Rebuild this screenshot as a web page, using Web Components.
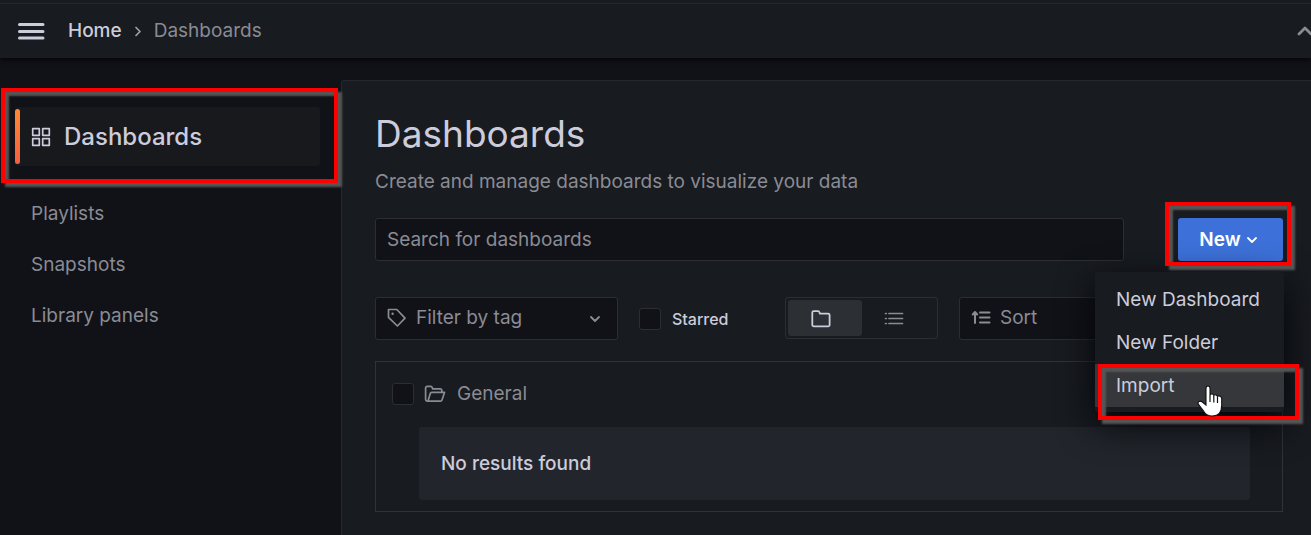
<!DOCTYPE html>
<html lang="en">
<head>
<meta charset="utf-8">
<title>Dashboards</title>
<style>
:root{
  --canvas:#111217; --primary:#181b1f; --secondary:#22252b; --line:#2c2e33;
  --text:#ccccdc; --muted:#8a8b95; --blue:#3d71d9; --active:#35373b;
}
html,body{margin:0;background:var(--canvas);min-height:100vh}
body{font:400 19px/28px Inter,"Liberation Sans",sans-serif;color:var(--text);overflow:hidden}
</style>
</head>
<body>
<app-shell>
  <app-header slot="header"></app-header>
  <side-nav slot="nav"></side-nav>
  <dashboard-page></dashboard-page>
</app-shell>
<script>
const define = (name, css, html, setup) => {
  const template = document.createElement('template');
  template.innerHTML = `<style>*{box-sizing:border-box}${css}</style>${html}`;
  customElements.define(name, class extends HTMLElement {
    constructor() {
      super();
      this.attachShadow({mode: 'open'}).append(template.content.cloneNode(true));
    }
    connectedCallback() { if (setup) setup(this, this.shadowRoot); }
  });
};

const icons = {
  menu: [28, '<path d="M2.500 7.500h23.500M2.500 14.500h23.500M2.500 21h23.500" stroke-width="3"/>'],
  right: [16, '<path d="M6 4.500l4 4-4 4" stroke-width="1.700"/>'],
  down: [16, '<path d="M4 6l4 4 4-4" stroke-width="1.800"/>'],
  up: [24, '<path d="M6 15l6-6 6 6" stroke-width="2.800"/>'],
  apps: [20, '<path d="M1.700 1.700h6.600v6.600H1.700zM11.700 1.700h6.600v6.600h-6.600zM1.700 11.700h6.600v6.600H1.700zM11.700 11.700h6.600v6.600h-6.600z" stroke-width="1.700"/>'],
  tag: [20, '<path d="M1.500 1.500h8.300l8.200 8.700-7.600 7.800-8.900-8.600z" stroke-width="1.700"/><circle cx="5.600" cy="5.800" r="1.200" fill="currentColor" stroke="none"/>'],
  folder: [20, '<path d="M1.300 15.800V3.600a1.500 1.500 0 0 1 1.500-1.500h4.300a1.400 1.400 0 0 1 1.300 1l.5 1.500h8.200a1.500 1.500 0 0 1 1.500 1.500v9.800a1.500 1.500 0 0 1-1.500 1.500H2.800a1.500 1.500 0 0 1-1.500-1.600z" stroke-width="1.800"/>'],
  open: [22, '<path d="M3.200 18.200a1.600 1.600 0 0 1-1.600-1.600V5a1.600 1.600 0 0 1 1.600-1.600h3.500a1.600 1.600 0 0 1 1.500 1.100l.4 1.300h7.600A1.600 1.600 0 0 1 17.800 7.400v2M3.200 18.200h13.200a1.700 1.700 0 0 0 1.600-1.200l2.500-7.600H7.700a1.500 1.500 0 0 0-1.400 1l-2 6.700a1.300 1.300 0 0 1-1.100 1.100z" stroke-width="1.700"/>'],
  list: [20, '<path d="M5 4.500h13.500M5 9.500h13.500M5 14.500h13.500M1.500 4.500h.8M1.500 9.500h.8M1.500 14.500h.8" stroke-width="1.700"/>'],
  sort: [20, '<path d="M9 4.500h9.500M9 9.500h9.500M9 14.500h9.500M4 15V4.500M1.800 6.500L4 4l2.200 2.500" stroke-width="2"/>']
};
define('ui-icon', ':host{display:block;flex:none}svg{display:block;fill:none;stroke:currentColor;stroke-linecap:round;stroke-linejoin:round}', '<svg aria-hidden="true"></svg>', (el, root) => {
  const [size, body] = icons[el.getAttribute('name')];
  const svg = root.querySelector('svg');
  svg.setAttribute('viewBox', `0 0 ${size} ${size}`);
  svg.setAttribute('width', size);
  svg.setAttribute('height', size);
  svg.innerHTML = body;
});

/* Red callout drawn around the control that hosts it */
define('call-out', `:host{position:absolute;z-index:5;pointer-events:none;border:4px solid #f00;
  box-shadow:4px 4px 2px #555,inset 4px 4px 2px #555}`, '');

define('app-shell', `:host{display:grid;grid-template:auto 1fr/341px minmax(0,1fr);min-height:100vh}
  slot[name=header]{display:block;grid-column:1/-1;position:relative;z-index:1}
  slot[name=nav]{display:block;position:relative;z-index:1}
  .main{padding-top:22px;display:flex}::slotted(dashboard-page){flex:1;min-width:0}`,
  '<slot name="header"></slot><slot name="nav"></slot><main class="main"><slot></slot></main>');

define('app-header', `:host{display:block;background:var(--primary);padding-top:3px;box-shadow:0 1px 6px #000}
  header{display:flex;align-items:center;height:55px;padding-left:17px;border-top:1px solid #25282c;overflow:hidden}
  button{border:0;padding:0;background:none;color:inherit}
  ol{display:flex;align-items:center;gap:8px;margin:0 0 0 23px;padding:0;list-style:none}
  a{color:inherit;text-decoration:none}.home{font-weight:500}.current{color:var(--muted)}ui-icon[name=right]{color:#a0a0ac}
  .up{margin:0 -6px 0 auto;color:var(--muted)}`,
  `<header><button aria-label="Toggle menu"><ui-icon name="menu"></ui-icon></button>
  <nav aria-label="Breadcrumbs"><ol><li class="home"><a href="#home">Home</a></li><li aria-hidden="true"><ui-icon name="right"></ui-icon></li><li class="current"><a href="#dashboards">Dashboards</a></li></ol></nav>
  <button class="up" aria-label="Hide top bar"><ui-icon name="up"></ui-icon></button></header>`);

define('side-nav', `:host{display:block;padding:49px 21px 0 15px}
  nav{display:flex;flex-direction:column}
  a{color:var(--muted);text-decoration:none;padding:0 16px;line-height:51px}
  .active{position:relative;display:flex;align-items:center;gap:13px;height:59px;margin-bottom:22px;background:#18191c;border-radius:3px;color:var(--text);font-weight:500;font-size:24px}
  .active::before{content:"";position:absolute;left:0;top:2px;bottom:2px;width:5px;border-radius:3px;background:linear-gradient(#ff8833,#f55f3e)}
  call-out{inset:-19px -18px -17px -14px}`,
  `<nav aria-label="Sections"><a class="active" href="#dashboards" aria-current="page"><ui-icon name="apps"></ui-icon>Dashboards<call-out></call-out></a>
  <a href="#playlists">Playlists</a><a href="#snapshots">Snapshots</a><a href="#library">Library panels</a></nav>`);

define('new-menu', `:host{display:block;position:relative;z-index:3}
  button{font:inherit;font-weight:600;color:#fff;background:var(--blue);border:0;border-radius:3px;display:flex;align-items:center;justify-content:center;gap:3px;width:105px;height:43px;padding:0 2px 0 0}
  button+call-out{inset:-16px -8px -5px -13px}
  .menu{position:absolute;top:54px;right:-1px;width:189px;padding:6px 0 5px;background:var(--primary);border-radius:3px;box-shadow:0 12px 36px #010409}
  a{display:block;position:relative;padding:0 21px;line-height:43px;color:inherit;text-decoration:none;white-space:nowrap}
  .hover{background:var(--active)}.hover call-out{inset:0 -15px -13px 3px}
  .hand{position:absolute;z-index:6;left:102px;top:21px;width:27px;height:32px}`,
  `<button aria-haspopup="menu" aria-expanded="true">New<ui-icon name="down"></ui-icon></button><call-out></call-out>
  <div class="menu" role="menu"><a role="menuitem" href="#new">New Dashboard</a><a role="menuitem" href="#folder">New Folder</a>
  <a role="menuitem" class="hover" href="#import">Import<call-out></call-out>
  <svg class="hand" viewBox="0 0 27 32" aria-hidden="true"><path d="M9 3.200C9 .3 13 .3 13 3.200V10c.8-1.500 3.300-1.200 3.800.5 1-1.200 3.100-.8 3.600.9 1.400-1 4.100-.3 4.300 2V20c0 7-3 11-9.200 11-5 0-7.500-2-9.300-5.500L1.300 19.200C.2 16.700 3 15.200 5 16.800L9 20z" fill="#fff" stroke="#111" stroke-width="1.100"/><path d="M13 10v7M16.800 11v6.500M20.500 12v6" stroke="#111" stroke-width="1.200"/></svg></a></div>`);

define('icon-select', `:host{display:block;position:relative;color:var(--muted)}
  select{display:block;width:100%;height:43px;appearance:none;font:inherit;color:inherit;background:var(--canvas);border:1px solid var(--line);border-radius:3px;padding:0 36px 2px 40px}
  ::slotted(ui-icon){position:absolute;left:12px;top:11px;pointer-events:none}
  .chev{position:absolute;right:15px;top:14px;pointer-events:none}`,
  '<select><option></option></select><slot></slot><ui-icon class="chev" name="down"></ui-icon>', (el, root) => {
    root.querySelector('option').textContent = el.getAttribute('label');
    root.querySelector('select').setAttribute('aria-label', el.getAttribute('label'));
  });

define('check-box', `:host{display:block}label{display:flex;align-items:center;gap:11px;font-size:16px;font-weight:500}
  input{appearance:none;margin:0;width:22px;height:22px;background:var(--canvas);border:1px solid var(--line);border-radius:3px}`,
  '<label><input type="checkbox"><slot></slot></label>', (el, root) => {
    if (el.hasAttribute('label')) root.querySelector('input').setAttribute('aria-label', el.getAttribute('label'));
  });

define('view-switch', `:host{display:block}
  fieldset{display:flex;margin:0;padding:2px;border:1px solid var(--line);border-radius:3px;height:42px;width:153px}
  label{flex:1;display:flex;align-items:center;justify-content:center;position:relative;border-radius:3px;color:var(--muted);padding:2px 8px 0 0}
  label:has(:checked){background:#2c2f34;color:var(--text)}input{position:absolute;inset:0;margin:0;opacity:0}`,
  `<fieldset aria-label="View"><label><input type="radio" name="view" aria-label="Folders" checked><ui-icon name="folder"></ui-icon></label>
  <label><input type="radio" name="view" aria-label="List"><ui-icon name="list"></ui-icon></label></fieldset>`);

define('folder-card', `:host{display:block;border:1px solid #303337;padding:18px 32px 11px 16px}
  .head{display:flex;align-items:center;color:var(--muted);height:28px}
  ui-icon{margin:0 11px 0 10px}h2{font:inherit;margin:0}
  .empty{margin:19px 0 0 27px;padding:0 22px;height:73px;display:flex;align-items:center;background:var(--secondary);border-radius:3px;font-weight:500}`,
  `<div class="head"><check-box label="Select folder General"></check-box><ui-icon name="open"></ui-icon><h2>General</h2></div>
  <div class="empty"><slot></slot></div>`);

define('dashboard-page', `:host{display:block;background:var(--primary);border:1px solid #25282c;border-width:1px 0 0 1px;border-top-left-radius:3px;padding:28px 28px 22px 33px}
  h1{font-size:37px;font-weight:400;line-height:50px;margin:0}
  p{margin:9px 0 22px;color:var(--muted)}
  .search{display:flex;gap:54px}
  .search input{flex:1;min-width:0;height:43px;font:inherit;color:inherit;background:var(--canvas);border:1px solid var(--line);border-radius:3px;padding:0 11px}
  ::placeholder{color:var(--muted);opacity:1}
  .tools{display:flex;align-items:center;margin:36px 0 21px}
  .tag{width:243px;margin-right:21px}view-switch{align-self:flex-start;margin-right:21px}.star{width:146px}.sort{flex:1}`,
  `<h1>Dashboards</h1><p>Create and manage dashboards to visualize your data</p>
  <div class="search"><input type="search" aria-label="Search for dashboards" placeholder="Search for dashboards"><new-menu></new-menu></div>
  <div class="tools"><icon-select class="tag" label="Filter by tag"><ui-icon name="tag"></ui-icon></icon-select><check-box class="star">Starred</check-box>
  <view-switch></view-switch><icon-select class="sort" label="Sort"><ui-icon name="sort"></ui-icon></icon-select></div>
  <folder-card>No results found</folder-card>`);
</script>
</body>
</html>
